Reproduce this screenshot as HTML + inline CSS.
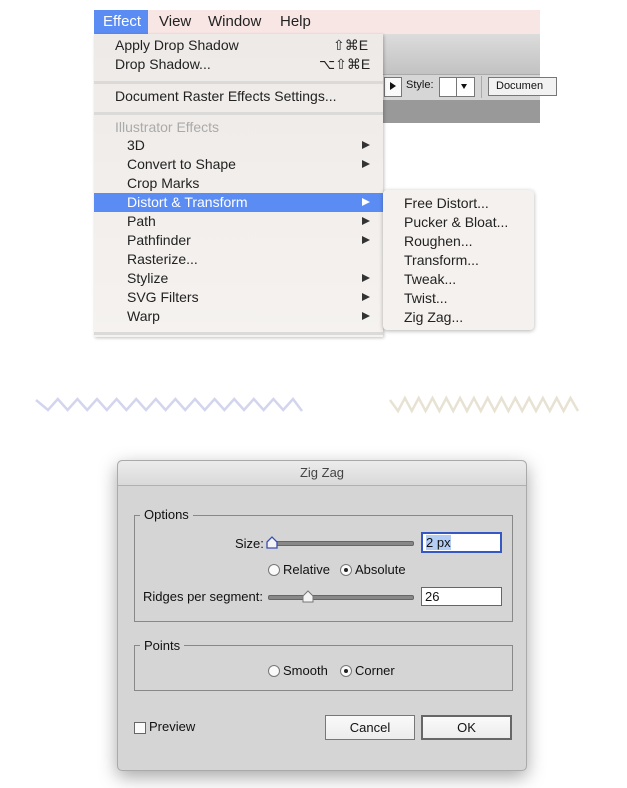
<!DOCTYPE html>
<html><head><style>
body{margin:0;width:627px;height:788px;background:#fff;position:relative;font-family:"Liberation Sans",sans-serif;overflow:hidden}
.a{position:absolute}
.mi{position:absolute;left:0;width:289px;height:19px;line-height:19px;font-size:14px;color:#222}
.mi span.t{position:absolute;left:33px}
.arr{position:absolute;left:268px;top:5px;width:0;height:0;border-left:8px solid #333;border-top:4.5px solid transparent;border-bottom:4.5px solid transparent}
.si{position:absolute;left:21px;font-size:14px;color:#222;line-height:19px}
.d{font-size:13px;color:#111}
.rad{position:absolute;width:10px;height:10px;border:1px solid #777;border-radius:50%;background:#fafafa}
.rad.on::after{content:"";position:absolute;left:3px;top:3px;width:4px;height:4px;border-radius:50%;background:#222}
.sl{position:absolute;height:3px;background:#888;border:1px solid #666;border-radius:2px}
</style></head><body>
<div class="a" style="left:94px;top:10px;width:446px;height:24px;background:#f8e6e4"></div>
<div class="a" style="left:383px;top:34px;width:157px;height:40px;background:linear-gradient(#dcdcdc,#c2c2c2)"></div>
<div class="a" style="left:383px;top:74px;width:157px;height:26px;background:#d6d6d6;border-top:1px solid #aaa"></div>
<div class="a" style="left:383px;top:100px;width:157px;height:23px;background:#999"></div>
<div class="a" style="left:384px;top:77px;width:16px;height:18px;background:#fafafa;border:1px solid #777"></div>
<div class="a" style="left:390px;top:82px;width:0;height:0;border-left:6px solid #111;border-top:4px solid transparent;border-bottom:4px solid transparent"></div>
<div class="a" style="left:406px;top:79px;font-size:11px;color:#111">Style:</div>
<div class="a" style="left:439px;top:77px;width:34px;height:18px;background:#fff;border:1px solid #777"></div>
<div class="a" style="left:456px;top:77px;width:1px;height:20px;background:#777"></div>
<div class="a" style="left:461px;top:84px;width:0;height:0;border-top:5px solid #111;border-left:3.5px solid transparent;border-right:3.5px solid transparent"></div>
<div class="a" style="left:481px;top:76px;width:1px;height:22px;background:#aaa"></div>
<div class="a" style="left:488px;top:77px;width:60px;height:17px;background:#f2f2f2;border:1px solid #777;font-size:11px;line-height:17px;padding-left:7px;color:#111">Documen</div>
<div class="a" style="left:94px;top:10px;width:54px;height:24px;background:#5b8cf3"></div>
<div class="a" style="left:103px;top:13px;font-size:15px;color:#fff">Effect</div>
<div class="a" style="left:159px;top:13px;font-size:15px;color:#222">View</div>
<div class="a" style="left:208px;top:13px;font-size:15px;color:#222">Window</div>
<div class="a" style="left:280px;top:13px;font-size:15px;color:#222">Help</div>
<div class="a" style="left:94px;top:34px;width:289px;height:303px;background:linear-gradient(#eeeae8,#f5f2ef);box-shadow:1px 1px 3px rgba(0,0,0,.25)">
 <div class="a" style="left:21px;top:3px;font-size:14px;color:#222">Apply Drop Shadow</div>
 <div class="a" style="left:239px;top:3px;font-size:14px;color:#222">⇧⌘E</div>
 <div class="a" style="left:21px;top:22px;font-size:14px;color:#222">Drop Shadow...</div>
 <div class="a" style="left:225px;top:22px;font-size:14px;color:#222">⌥⇧⌘E</div>
 <div class="a" style="left:0;top:47px;width:289px;height:3px;background:#dcdad8"></div>
 <div class="a" style="left:21px;top:54px;font-size:14px;color:#222">Document Raster Effects Settings...</div>
 <div class="a" style="left:0;top:78px;width:289px;height:3px;background:#dcdad8"></div>
 <div class="a" style="left:21px;top:85px;font-size:14px;color:#aaa">Illustrator Effects</div>
 <div class="mi" style="top:102px"><span class="t">3D</span><i class="arr"></i></div>
 <div class="mi" style="top:121px"><span class="t">Convert to Shape</span><i class="arr"></i></div>
 <div class="mi" style="top:140px"><span class="t">Crop Marks</span></div>
 <div class="mi" style="top:159px;background:#5b8cf3;color:#fff"><span class="t">Distort &amp; Transform</span><i class="arr" style="border-left-color:#fff"></i></div>
 <div class="mi" style="top:178px"><span class="t">Path</span><i class="arr"></i></div>
 <div class="mi" style="top:197px"><span class="t">Pathfinder</span><i class="arr"></i></div>
 <div class="mi" style="top:216px"><span class="t">Rasterize...</span></div>
 <div class="mi" style="top:235px"><span class="t">Stylize</span><i class="arr"></i></div>
 <div class="mi" style="top:254px"><span class="t">SVG Filters</span><i class="arr"></i></div>
 <div class="mi" style="top:273px"><span class="t">Warp</span><i class="arr"></i></div>
 <div class="a" style="left:0;top:298px;width:289px;height:3px;background:#dcdad8"></div>
</div>
<div class="a" style="left:383px;top:190px;width:151px;height:140px;background:#f5f1ee;border-radius:4px;box-shadow:0 1px 4px rgba(0,0,0,.3)">
 <div class="si" style="top:4px">Free Distort...</div>
 <div class="si" style="top:23px">Pucker &amp; Bloat...</div>
 <div class="si" style="top:42px">Roughen...</div>
 <div class="si" style="top:61px">Transform...</div>
 <div class="si" style="top:80px">Tweak...</div>
 <div class="si" style="top:99px">Twist...</div>
 <div class="si" style="top:118px">Zig Zag...</div>
</div>
<svg class="a" style="left:0;top:380px" width="627" height="50">
<polyline fill="none" stroke="#d3d5ef" stroke-width="2.5" points="36,20 48,30 57.8,19 67.6,30 77.4,19 87.2,30 97,19 106.8,30 116.6,19 126.4,30 136.2,19 146,30 155.8,19 165.6,30 175.4,19 185.2,30 195,19 204.8,30 214.6,19 224.4,30 234.2,19 244,30 253.8,19 263.6,30 273.4,19 283.2,30 293,19 302,31"/>
<polyline fill="none" stroke="#e7e2d3" stroke-width="2.5" points="390,20 398,31 404.9,18 411.8,31 418.7,18 425.6,31 432.5,18 439.4,31 446.3,18 453.2,31 460.1,18 467,31 473.9,18 480.8,31 487.7,18 494.6,31 501.5,18 508.4,31 515.3,18 522.2,31 529.1,18 536,31 542.9,18 549.8,31 556.7,18 563.6,31 570.5,18 578,31"/>
</svg>
<div class="a" style="left:117px;top:460px;width:408px;height:309px;background:#d5d5d5;border:1px solid #aaa;border-radius:5px;box-shadow:0 6px 18px rgba(0,0,0,.35)">
 <div class="a" style="left:0;top:0;width:408px;height:24px;background:linear-gradient(#ececec,#d9d9d9);border-bottom:1px solid #b0b0b0;border-radius:5px 5px 0 0;text-align:center;line-height:24px;font-size:13px;color:#444">Zig Zag</div>
 <div class="a" style="left:16px;top:54px;width:377px;height:105px;border:1px solid #888"></div>
 <div class="a d" style="left:22px;top:46px;background:#d5d5d5;padding:0 4px">Options</div>
 <div class="a d" style="left:117px;top:75px">Size:</div>
 <div class="sl" style="left:150px;top:80px;width:144px"></div>
 <svg class="a" style="left:147px;top:74px" width="14" height="16"><path d="M2,7 L7,2 L12,7 L12,13 L2,13 Z" fill="#f4f4f4" stroke="#3a4fb0" stroke-width="1.3"/></svg>
 <div class="a d" style="left:303px;top:71px;width:74px;height:17px;background:#fff;border:2px solid #3558c4;line-height:17px;padding-left:3px"><span style="background:#b3cdf5">2 px</span></div>
 <div class="rad" style="left:150px;top:103px"></div>
 <div class="a d" style="left:165px;top:101px">Relative</div>
 <div class="rad on" style="left:222px;top:103px"></div>
 <div class="a d" style="left:237px;top:101px">Absolute</div>
 <div class="a d" style="left:25px;top:128px">Ridges per segment:</div>
 <div class="sl" style="left:150px;top:134px;width:144px"></div>
 <svg class="a" style="left:183px;top:128px" width="14" height="16"><path d="M2,7 L7,2 L12,7 L12,13 L2,13 Z" fill="#f4f4f4" stroke="#777" stroke-width="1"/></svg>
 <div class="a d" style="left:303px;top:126px;width:76px;height:17px;background:#fff;border:1px solid #666;line-height:17px;padding-left:3px">26</div>
 <div class="a" style="left:16px;top:184px;width:377px;height:44px;border:1px solid #888"></div>
 <div class="a d" style="left:22px;top:177px;background:#d5d5d5;padding:0 4px">Points</div>
 <div class="rad" style="left:150px;top:204px"></div>
 <div class="a d" style="left:165px;top:202px">Smooth</div>
 <div class="rad on" style="left:222px;top:204px"></div>
 <div class="a d" style="left:237px;top:202px">Corner</div>
 <div class="a" style="left:16px;top:261px;width:10px;height:10px;border:1px solid #666;background:#fafafa"></div>
 <div class="a d" style="left:31px;top:258px">Preview</div>
 <div class="a d" style="left:207px;top:254px;width:88px;height:23px;border:1px solid #777;background:linear-gradient(#fafafa,#ececec);text-align:center;line-height:23px">Cancel</div>
 <div class="a d" style="left:303px;top:254px;width:87px;height:21px;border:2px solid #666;background:linear-gradient(#fafafa,#ececec);text-align:center;line-height:21px">OK</div>
</div>
</body></html>
